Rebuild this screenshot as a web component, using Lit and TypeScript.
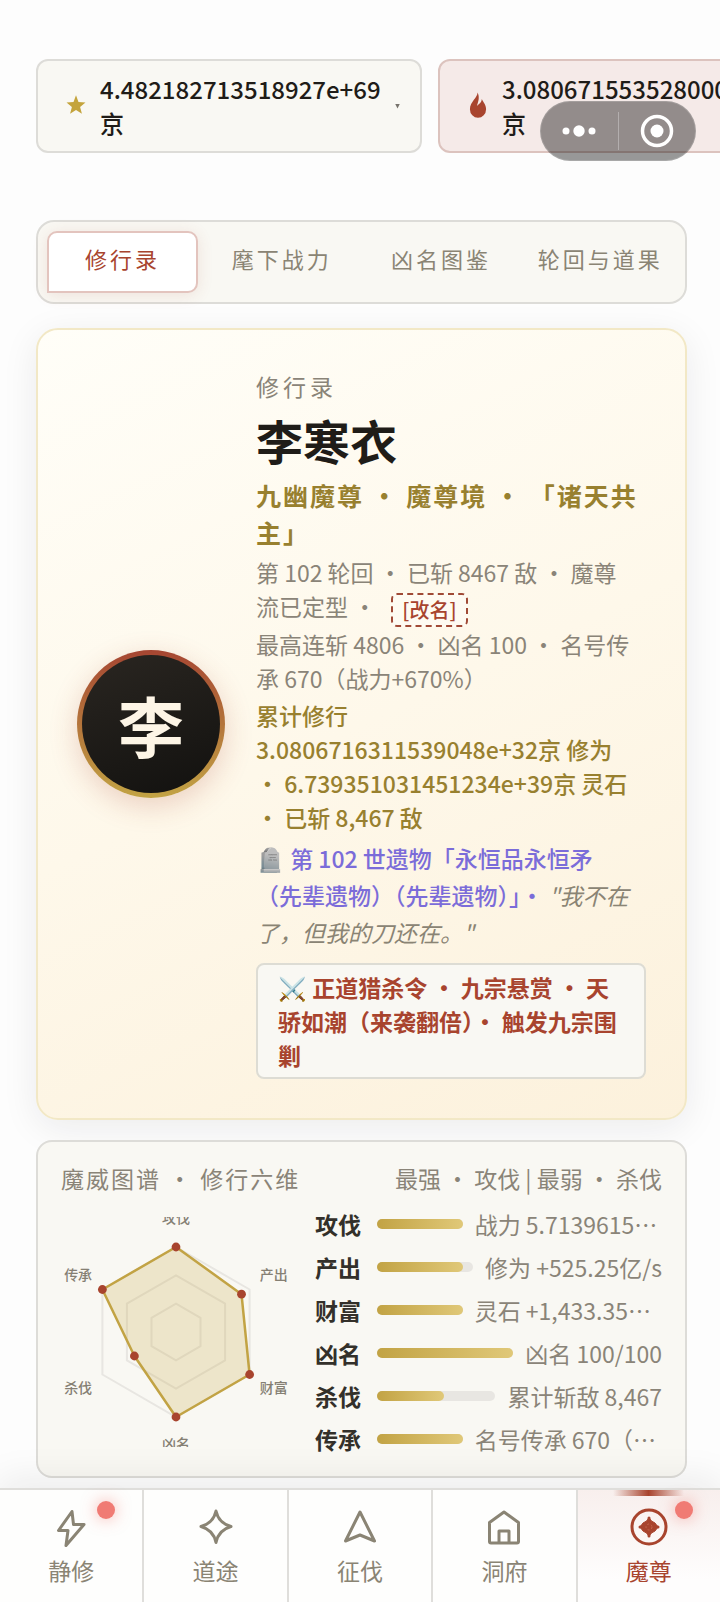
import { LitElement, html, css, svg } from "lit";
import { customElement, state } from "lit/decorators.js";
import { classMap } from "lit/directives/class-map.js";

interface Stat {
  name: string;
  ratio: number;
  detail: string;
  clipped?: boolean;
}

const STATS: Stat[] = [
  { name: "攻伐", ratio: 1, detail: "战力 5.7139615…", clipped: true },
  { name: "产出", ratio: 0.89, detail: "修为 +525.25亿/s" },
  { name: "财富", ratio: 1, detail: "灵石 +1,433.35…", clipped: true },
  { name: "凶名", ratio: 1, detail: "凶名 100/100" },
  { name: "杀伐", ratio: 0.565, detail: "累计斩敌 8,467" },
  { name: "传承", ratio: 1, detail: "名号传承 670（…", clipped: true },
];

const TABS = ["修行录", "麾下战力", "凶名图鉴", "轮回与道果"];

const icons = {
  bolt: svg`<path d="M17 2.500 3.500 21.500H13L11 36.500 29 15.500H18.500Z" />`,
  star: svg`<path d="M16 2Q18.5 14 31 17.500 18.5 21 16 33.500 13.500 21 1 17.500 13.500 14 16 2Z" />`,
  arrow: svg`<path d="M16 3 30.500 32 16 26 1.500 32Z" />`,
  house: svg`<path d="M16 3 1.500 13.500V32.500Q1.500 34 3 34H29Q30.500 34 30.500 32.500V13.500ZM11 34V22H21V34" />`,
  seal: svg`<circle cx="16" cy="18" r="17" /><path class="solid" d="M16 9 18.500 12 22 14 25 18 22 22 18.500 24 16 27 13.500 24 10 22 7 18 10 14 13.500 12Z" /><path class="cross" d="M16 9V27M7 18H25" /><circle class="eye" cx="16" cy="18" r="3" />`,
};

const NAV = [
  { label: "静修", icon: icons.bolt, dot: true },
  { label: "道途", icon: icons.star, dot: false },
  { label: "征伐", icon: icons.arrow, dot: false },
  { label: "洞府", icon: icons.house, dot: false },
  { label: "魔尊", icon: icons.seal, dot: true },
];

@customElement("radar-chart")
export class RadarChart extends LitElement {
  static styles = css`
    :host { display: block; }
    .chart { display: block; width: 100%; overflow: hidden; }
    .ring { fill: none; stroke: #201c14; stroke-opacity: 0.08; stroke-width: 2; }
    .area { fill: #c4a43c; fill-opacity: 0.22; stroke: #c2a344; stroke-width: 2.5; stroke-linejoin: round; }
    .dot { fill: #a8442e; }
    .name { fill: #857f73; font-size: 14px; font-weight: 500; text-anchor: middle; dominant-baseline: central; }
  `;

  private point(index: number, radius: number): [number, number] {
    const angle = (Math.PI / 3) * index - Math.PI / 2;
    return [115 + radius * Math.cos(angle), 115 + radius * Math.sin(angle)];
  }

  private outline(radii: number[]) {
    return radii.map((r, i) => this.point(i, r).map((n) => n.toFixed(1)).join(",")).join(" ");
  }

  render() {
    const radius = 85;
    return html`<svg class="chart" viewBox="0 0 230 230" role="img" aria-label="修行六维">
      ${[1, 2, 3].map((k) => svg`<polygon class="ring" points=${this.outline(STATS.map(() => (radius * k) / 3))} />`)}
      <polygon class="area" points=${this.outline(STATS.map((s) => s.ratio * radius))} />
      ${STATS.map((s, i) => {
        const [x, y] = this.point(i, s.ratio * radius);
        const [tx, ty] = this.point(i, 113);
        return svg`<circle class="dot" cx=${x} cy=${y} r="4.4" /><text class="name" x=${tx} y=${ty - 2}>${s.name}</text>`;
      })}
    </svg>`;
  }
}

@customElement("app-root")
export class AppRoot extends LitElement {
  @state() private tab = 0;
  @state() private page = 4;

  static styles = css`
    :host {
      display: flex;
      flex-direction: column;
      min-height: 100vh;
      overflow: clip;
      background: #fdfdfd;
      color: #1f1c18;
      font-family: "Noto Sans CJK SC", sans-serif;
      font-size: 23px;
      line-height: 34px;
    }
    * { box-sizing: border-box; }
    button { font: inherit; color: inherit; margin: 0; cursor: pointer; }
    .wallet { display: flex; gap: 16px; padding: 59px 36px 0; overflow: hidden; }
    .coin {
      flex: 0 0 386px;
      display: flex;
      align-items: center;
      gap: 14px;
      padding: 11px 20px 11px 28px;
      border: 2px solid #dddcd8;
      border-radius: 12px;
      background: #f9f8f3;
      font-size: 24px;
      font-weight: 500;
      text-align: left;
    }
    .coin.fire { border-color: #dcc3be; background: #f5eae8; }
    .coin-icon { flex: none; width: 20px; height: 28px; }
    .amount { flex: 1; min-width: 0; white-space: nowrap; }
    .caret { flex: none; width: 5px; height: 5px; background: #77736c; clip-path: polygon(0 0, 100% 0, 50% 100%); }
    .capsule {
      position: absolute;
      top: 101px;
      right: 24px;
      display: flex;
      align-items: center;
      width: 156px;
      height: 60px;
      border: 1px solid rgba(255, 255, 255, 0.15);
      border-radius: 30px;
      background: rgba(0, 0, 0, 0.4);
    }
    .capsule-btn { flex: 1; height: 38px; padding: 0; border: 0; background: none; display: grid; place-items: center; }
    .capsule-btn + .capsule-btn { border-left: 1px solid rgba(255, 255, 255, 0.3); }
    .main { display: flex; flex-direction: column; padding: 67px 33px 10px 36px; }
    .tabs {
      display: grid;
      grid-template-columns: repeat(4, minmax(0, 1fr));
      gap: 8px;
      padding: 9px;
      border: 2px solid #dddcd8;
      border-radius: 18px;
      background: #f9f8f3;
    }
    .tab {
      height: 62px;
      padding: 0 0 8px;
      border: 2px solid transparent;
      border-radius: 10px 10px 10px 0;
      background: none;
      color: #8a8474;
      font-size: 22px;
      letter-spacing: 3px;
      white-space: nowrap;
    }
    .tab.on { color: #a8442e; background: #fff; border-color: #e3c4be; box-shadow: 0 2px 16px rgba(168, 68, 46, 0.12); }
    .hero {
      display: flex;
      align-items: center;
      gap: 31px;
      margin-top: 24px;
      padding: 39px;
      border: 2px solid #f2e8c6;
      border-radius: 22px;
      background: linear-gradient(155deg, #fffef8, #fef8ea 50%, #fcf1dc);
      box-shadow: 0 8px 36px rgba(30, 30, 40, 0.08);
    }
    .avatar {
      flex: none;
      display: grid;
      place-items: center;
      width: 148px;
      height: 148px;
      border: 5px solid transparent;
      border-radius: 50%;
      background: linear-gradient(160deg, #2a2621, #12110f) padding-box, linear-gradient(180deg, #a64632, #c2a344) border-box;
      box-shadow: 0 8px 28px rgba(168, 68, 46, 0.22);
      color: #fdf5e6;
      font-size: 66px;
      font-weight: 700;
      line-height: 90px;
    }
    .bio { flex: 1; min-width: 0; color: #8a8478; }
    .eyebrow { letter-spacing: 4px; }
    .name { margin: 0; padding: 4px 0; color: #1f1c18; font-size: 47px; line-height: 66px; font-weight: 700; }
    .rank { color: #98802f; font-size: 25px; line-height: 37px; letter-spacing: 2px; font-weight: 700; }
    .line { padding-top: 4px; }
    .rename {
      height: 34px;
      margin: -4px 0 -4px 10px;
      padding: 0 9px;
      border: 2px dashed #a04a36;
      border-radius: 6px;
      background: rgba(255, 255, 255, 0.3);
      color: #a8442e;
      font-size: 20px;
      line-height: 28px;
      font-weight: 500;
      vertical-align: middle;
    }
    .total { padding-top: 3px; color: #98802f; font-weight: 500; }
    .relic { padding-top: 6px; line-height: 37px; color: #7b6cd9; font-weight: 500; }
    .quote { color: #8a8474; font-weight: 400; font-style: italic; }
    .bounty {
      margin-top: 12px;
      padding: 5px 20px;
      border: 2px solid #dddcd4;
      border-radius: 8px;
      background: #f9f8f3;
      color: #a8442e;
      font-weight: 700;
    }
    .panel {
      margin-top: 20px;
      padding: 19px 23px 20px;
      border: 2px solid #dddcd8;
      border-radius: 16px;
      background: #f9f8f3;
    }
    .panel-head { display: flex; justify-content: space-between; color: #8a8478; }
    .panel-title { margin: 0; font: inherit; letter-spacing: 2px; }
    .panel-body { display: grid; grid-template-columns: 230px minmax(0, 1fr); gap: 24px; align-items: center; padding-top: 12px; }
    .rows { display: flex; flex-direction: column; gap: 9px; }
    .row { display: flex; align-items: center; gap: 12px; }
    .row-name { flex: none; width: 50px; color: #33302a; font-weight: 700; }
    .track { flex: 1; height: 10px; border-radius: 5px; background: #e8e6e2; }
    .fill { height: 100%; border-radius: 5px; background: linear-gradient(90deg, #c2a344, #e0c878); }
    .detail { flex: none; color: #8a8478; white-space: nowrap; }
    .detail.clipped { width: 54%; overflow: hidden; }
    .nav {
      position: sticky;
      bottom: 0;
      display: flex;
      height: 114px;
      margin-top: auto;
      border-top: 2px solid #dfdedb;
      background: #fefefd;
      box-shadow: 0 -8px 36px rgba(30, 30, 20, 0.08);
    }
    .nav-item {
      position: relative;
      box-sizing: content-box;
      flex: 1 1 0;
      display: flex;
      flex-direction: column;
      align-items: center;
      padding: 19px 0 0;
      border: 0;
      border-right: 2px solid #dfdedb;
      background: none;
      color: #8a8474;
      line-height: 34px;
    }
    .nav-item:last-child { border-right: 0; }
    .nav-item.on { color: #a8442e; background: linear-gradient(180deg, #f8efed, #fefdfd 80%); }
    .nav-item.on::before {
      content: "";
      position: absolute;
      top: 0;
      width: 50%;
      height: 6px;
      background: linear-gradient(90deg, transparent, #a8442e, transparent);
    }
    .nav-icon { width: 32px; height: 40px; margin-bottom: 4px; overflow: visible; fill: none; stroke: currentColor; stroke-width: 3; stroke-linejoin: round; }
    .nav-icon .solid { fill: currentColor; stroke-width: 1; }
    .nav-icon .cross { stroke-width: 3; stroke-linecap: round; }
    .nav-icon .eye { stroke: #c4674f; stroke-width: 1; stroke-dasharray: 2 2; }
    .badge { position: absolute; top: 11px; right: 27px; width: 18px; height: 18px; border-radius: 50%; background: #f07b74; box-shadow: 0 0 16px rgba(240, 100, 90, 0.5); }
  `;

  render() {
    return html`
      <header class="wallet">
        <button class="coin">
          <svg class="coin-icon" viewBox="0 0 18 26" aria-hidden="true">
            <path fill="#c4a43c" d="M9 3 11.300 9.200 17.800 9.700 12.800 13.900 14.500 20.300 9 16.800 3.500 20.300 5.200 13.900 .2 9.700 6.700 9.200Z" />
          </svg>
          <span class="amount">4.482182713518927e+69<br />京</span>
          <span class="caret"></span>
        </button>
        <button class="coin fire">
          <svg class="coin-icon" viewBox="0 0 18 26" aria-hidden="true">
            <path fill="#a8442e" d="M8.500 .5C9 5 1.500 9 1.500 16A7.500 8 0 0 0 16.500 16C16.500 12 14.500 10.500 12.500 6.500 12.500 9.500 10.500 10.500 8 13 9 9.500 11 5 8.500 .5Z" />
          </svg>
          <span class="amount">3.080671553528000<br />京</span>
        </button>
      </header>
      <div class="capsule">
        <button class="capsule-btn" aria-label="更多">
          <svg width="34" height="12" viewBox="0 0 34 12" fill="#fff">
            <circle cx="4" cy="6" r="3.500" /><circle cx="17" cy="6" r="5.700" /><circle cx="30" cy="6" r="3.500" />
          </svg>
        </button>
        <button class="capsule-btn" aria-label="关闭">
          <svg width="34" height="34" viewBox="0 0 34 34">
            <circle cx="17" cy="17" r="14.500" fill="none" stroke="#fff" stroke-width="3.500" /><circle cx="17" cy="17" r="6.500" fill="#fff" />
          </svg>
        </button>
      </div>

      <main class="main">
        <div class="tabs" role="tablist">
          ${TABS.map(
            (t, i) => html`<button
              class=${classMap({ tab: true, on: i === this.tab })}
              role="tab"
              aria-selected=${i === this.tab}
              @click=${() => (this.tab = i)}
            >${t}</button>`
          )}
        </div>

        <section class="hero">
          <div class="avatar">李</div>
          <div class="bio">
            <div class="eyebrow">修行录</div>
            <h1 class="name">李寒衣</h1>
            <div class="rank">九幽魔尊 · 魔尊境 · 「诸天共主」</div>
            <div class="line">第 102 轮回 · 已斩 8467 敌 · 魔尊<br />流已定型 · <button class="rename">[改名]</button></div>
            <div class="line">最高连斩 4806 · 凶名 100 · 名号传<br />承 670（战力+670%）</div>
            <div class="line total">累计修行<br />3.0806716311539048e+32京 修为<br />· 6.739351031451234e+39京 灵石<br />· 已斩 8,467 敌</div>
            <div class="relic">🪦 第 102 世遗物「永恒品永恒矛<br />（先辈遗物）（先辈遗物）」· <span class="quote">"我不在<br />了，但我的刀还在。"</span></div>
            <div class="bounty">⚔️ 正道猎杀令 · 九宗悬赏 · 天<br />骄如潮（来袭翻倍）· 触发九宗围<br />剿</div>
          </div>
        </section>

        <section class="panel">
          <div class="panel-head">
            <h2 class="panel-title">魔威图谱 · 修行六维</h2>
            <span>最强 · 攻伐 | 最弱 · 杀伐</span>
          </div>
          <div class="panel-body">
            <radar-chart></radar-chart>
            <div class="rows">
              ${STATS.map(
                (s) => html`<div class="row">
                  <span class="row-name">${s.name}</span>
                  <div class="track"><div class="fill" style="width:${s.ratio * 100}%"></div></div>
                  <span class=${classMap({ detail: true, clipped: !!s.clipped })}>${s.detail}</span>
                </div>`
              )}
            </div>
          </div>
        </section>
      </main>

      <nav class="nav">
        ${NAV.map(
          (n, i) => html`<button
            class=${classMap({ "nav-item": true, on: i === this.page })}
            @click=${() => (this.page = i)}
          >
            <svg class="nav-icon" viewBox="0 0 32 40" aria-hidden="true">${n.icon}</svg>
            <span>${n.label}</span>
            ${n.dot ? html`<span class="badge"></span>` : ""}
          </button>`
        )}
      </nav>
    `;
  }
}
